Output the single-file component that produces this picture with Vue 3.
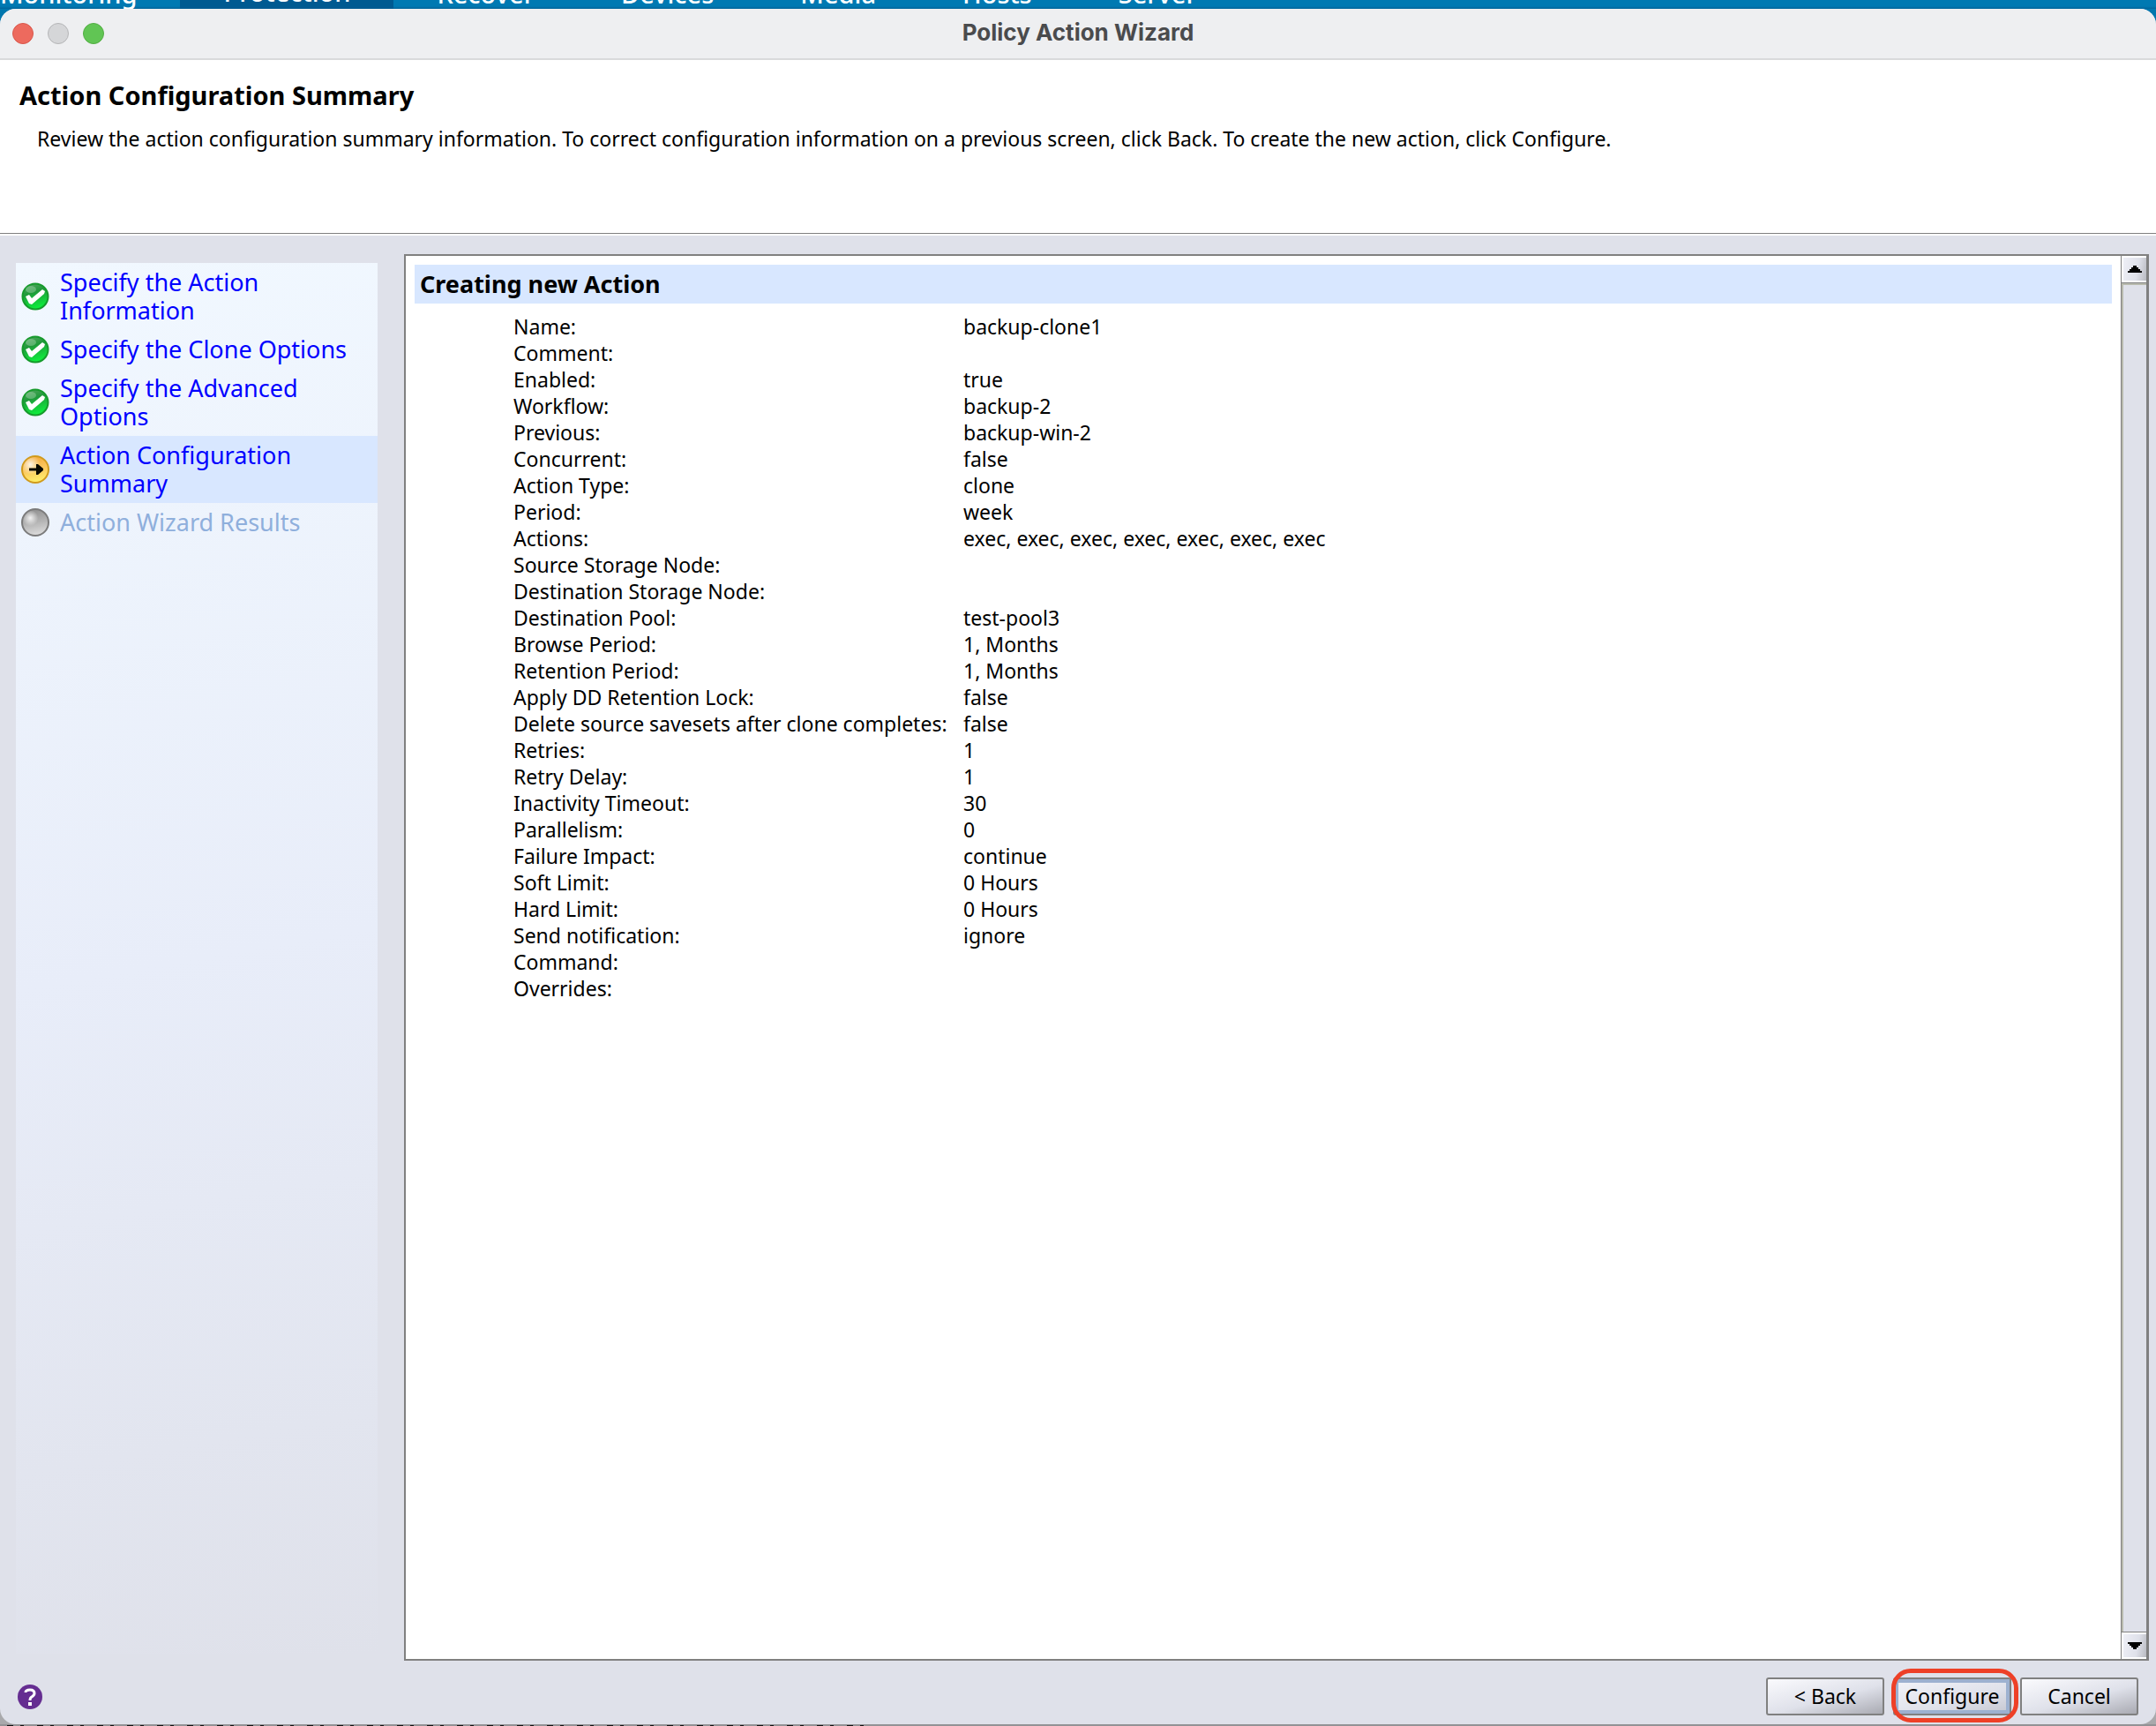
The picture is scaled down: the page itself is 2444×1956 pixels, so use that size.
<script setup>
const tabs = ['Monitoring', 'Protection', 'Recover', 'Devices', 'Media', 'Hosts', 'Server']

const steps = [
  { label: 'Specify the Action Information', state: 'done' },
  { label: 'Specify the Clone Options', state: 'done' },
  { label: 'Specify the Advanced Options', state: 'done' },
  { label: 'Action Configuration Summary', state: 'current' },
  { label: 'Action Wizard Results', state: 'pending' },
]

const rows = [
  ['Name:', 'backup-clone1'],
  ['Comment:', ''],
  ['Enabled:', 'true'],
  ['Workflow:', 'backup-2'],
  ['Previous:', 'backup-win-2'],
  ['Concurrent:', 'false'],
  ['Action Type:', 'clone'],
  ['Period:', 'week'],
  ['Actions:', 'exec, exec, exec, exec, exec, exec, exec'],
  ['Source Storage Node:', ''],
  ['Destination Storage Node:', ''],
  ['Destination Pool:', 'test-pool3'],
  ['Browse Period:', '1, Months'],
  ['Retention Period:', '1, Months'],
  ['Apply DD Retention Lock:', 'false'],
  ['Delete source savesets after clone completes:', 'false'],
  ['Retries:', '1'],
  ['Retry Delay:', '1'],
  ['Inactivity Timeout:', '30'],
  ['Parallelism:', '0'],
  ['Failure Impact:', 'continue'],
  ['Soft Limit:', '0 Hours'],
  ['Hard Limit:', '0 Hours'],
  ['Send notification:', 'ignore'],
  ['Command:', ''],
  ['Overrides:', ''],
]
</script>

<template>
  <div class="desktop">
    <nav class="tabs">
      <a v-for="(tab, i) in tabs" :key="tab" href="#" class="tab" :class="{ active: i === 1 }">{{ tab }}</a>
    </nav>

    <div class="window">
      <header class="titlebar">
        <div class="lights">
          <button class="light close" aria-label="Close"></button>
          <button class="light minimize" aria-label="Minimize" disabled></button>
          <button class="light zoom" aria-label="Zoom"></button>
        </div>
        <div class="title">Policy Action Wizard</div>
        <div class="lights-balance"></div>
      </header>

      <section class="intro">
        <h1>Action Configuration Summary</h1>
        <p>Review the action configuration summary information. To correct configuration information on a previous screen, click Back. To create the new action, click Configure.</p>
      </section>

      <main class="body">
        <ol class="steps">
          <li v-for="step in steps" :key="step.label" class="step" :class="step.state">
            <svg v-if="step.state === 'done'" class="step-icon" viewBox="0 0 32 32" aria-hidden="true">
              <defs>
                <linearGradient id="green" x1="0.3" y1="0" x2="0.6" y2="1">
                  <stop offset="0" stop-color="#4fa45c" />
                  <stop offset="0.35" stop-color="#1f9a3a" />
                  <stop offset="1" stop-color="#0cf53c" />
                </linearGradient>
              </defs>
              <circle cx="16" cy="16" r="14.5" fill="url(#green)" stroke="#169a2c" stroke-width="2" />
              <ellipse cx="11" cy="8" rx="6" ry="4" fill="#fff" opacity="0.25" />
              <path d="M5 16 L9 14 L12 18 L24 8 L27 10 L26 13 L12 25 L9 24 Z" fill="#fff" />
            </svg>
            <svg v-else-if="step.state === 'current'" class="step-icon" viewBox="0 0 32 32" aria-hidden="true">
              <defs>
                <linearGradient id="amber" x1="0.4" y1="0" x2="0.6" y2="1">
                  <stop offset="0" stop-color="#f3a93a" />
                  <stop offset="0.5" stop-color="#fbc860" />
                  <stop offset="1" stop-color="#fff36a" />
                </linearGradient>
                <radialGradient id="amberGlow" cx="0.3" cy="0.3" r="0.4">
                  <stop offset="0" stop-color="#fff" stop-opacity="0.85" />
                  <stop offset="1" stop-color="#fff" stop-opacity="0" />
                </radialGradient>
              </defs>
              <circle cx="16" cy="16" r="15" fill="url(#amber)" stroke="#d09a1c" stroke-width="2" />
              <circle cx="16" cy="16" r="14" fill="url(#amberGlow)" />
              <path d="M9 14.5 H17 V10 H19 L25 15 V17 L19 22 H17 V17.5 H9 Z" fill="#0a0a00" />
            </svg>
            <svg v-else class="step-icon" viewBox="0 0 32 32" aria-hidden="true">
              <defs>
                <linearGradient id="grey" x1="0.4" y1="0" x2="0.6" y2="1">
                  <stop offset="0" stop-color="#8f8f8f" />
                  <stop offset="0.5" stop-color="#b4b4b4" />
                  <stop offset="1" stop-color="#dedede" />
                </linearGradient>
                <radialGradient id="greyGlow" cx="0.3" cy="0.32" r="0.32">
                  <stop offset="0" stop-color="#fff" stop-opacity="0.85" />
                  <stop offset="1" stop-color="#fff" stop-opacity="0" />
                </radialGradient>
              </defs>
              <circle cx="16" cy="16" r="15" fill="url(#grey)" stroke="#7b7b7b" stroke-width="2" />
              <circle cx="16" cy="16" r="14" fill="url(#greyGlow)" />
            </svg>
            <span class="step-label">{{ step.label }}</span>
          </li>
        </ol>

        <section class="panel">
          <div class="content">
            <h2>Creating new Action</h2>
            <table>
              <tbody>
                <tr v-for="row in rows" :key="row[0]">
                  <th scope="row">{{ row[0] }}</th>
                  <td>{{ row[1] }}</td>
                </tr>
              </tbody>
            </table>
          </div>
          <div class="scrollbar">
            <button class="scroll-button" aria-label="Scroll up">
              <svg viewBox="0 0 16 8" aria-hidden="true"><path d="M6 0h4v2h2v2h2v2h2v2H0V6h2V4h2V2h2z" /></svg>
            </button>
            <div class="track"></div>
            <button class="scroll-button" aria-label="Scroll down">
              <svg viewBox="0 0 16 8" aria-hidden="true"><path d="M0 0h16v2h-2v2h-2v2h-2v2H6V6H4V4H2V2H0z" /></svg>
            </button>
          </div>
        </section>
      </main>

      <footer class="footer">
        <button class="help" aria-label="Help">
          <svg viewBox="0 0 28 28" aria-hidden="true">
            <circle cx="14" cy="14" r="14" fill="#652d91" />
            <path d="M9 9 Q9 6 14 6 Q19 6 19 10 Q19 12 16 14 Q14 15 14 18" fill="none" stroke="#fff" stroke-width="3" />
            <rect x="12" y="20" width="4" height="4" fill="#fff" />
          </svg>
        </button>
        <div class="actions">
          <button class="action">&lt; Back</button>
          <div class="highlight"><button class="action primary">Configure</button></div>
          <button class="action">Cancel</button>
        </div>
      </footer>
    </div>
    <div class="behind"></div>
  </div>
</template>

<style>
body {
  margin: 0;
}
</style>

<style scoped>
.desktop {
  display: flex;
  flex-direction: column;
  min-height: 100vh;
  background: linear-gradient(#0076ad 50%, #a9a9ac 50%);
  font-family: "Noto Sans", "Open Sans", sans-serif;
  font-size: 23px;
  color: #000;
}

button {
  margin: 0;
  padding: 0;
  border: 0;
  font: inherit;
  color: inherit;
}

.tabs {
  display: flex;
  align-items: flex-end;
  height: 10px;
  overflow: hidden;
  background: linear-gradient(#0079b2 70%, #00649a);
}

.tab {
  padding: 0 49px;
  font-size: 29px;
  font-weight: 500;
  line-height: 34px;
  color: #fff;
  text-decoration: none;
}

.tab:first-child {
  padding-left: 0;
}

.tab.active {
  padding-bottom: 2px;
  background: #005a91;
}

.window {
  display: flex;
  flex: 1;
  flex-direction: column;
  overflow: hidden;
  border-radius: 18px;
  background: #dfe1ea;
}

.titlebar {
  display: flex;
  align-items: center;
  height: 56px;
  border-bottom: 2px solid #d9dadb;
  background: #eeeff1;
}

.lights,
.lights-balance {
  display: flex;
  flex: 1;
  gap: 16px;
  padding: 0 14px;
}

.light {
  box-sizing: border-box;
  width: 24px;
  height: 24px;
  border: 1px solid #d9574b;
  border-radius: 50%;
  background: #ed6a5e;
}

.light.minimize {
  border-color: #b4b5b7;
  background: #d5d6d8;
}

.light.zoom {
  border-color: #52ad43;
  background: #61c554;
}

.title {
  padding-bottom: 2px;
  font-family: Inter, sans-serif;
  font-size: 26px;
  font-weight: 700;
  line-height: 32px;
  color: #4a4b4d;
}

.intro {
  box-sizing: border-box;
  min-height: 197px;
  padding: 20px 22px;
  border-bottom: 1px solid #808080;
  background: #fff;
}

h1 {
  margin: 0;
  font-size: 29px;
  font-weight: 700;
  line-height: 40px;
}

p {
  margin: 13px 0 0 20px;
  line-height: 32px;
}

.body {
  display: flex;
  flex: 1;
  gap: 30px;
  padding: 21px 8px 0 18px;
  border-top: 2px solid #fff;
}

.steps {
  box-sizing: border-box;
  width: 410px;
  margin: 10px 0 8px;
  padding: 0;
  list-style: none;
  background: linear-gradient(170deg, #f1f8ff, #e8edf9 50%, #dfe1ea);
}

.step {
  display: flex;
  align-items: center;
  gap: 12px;
  padding: 6px;
  font-size: 27px;
  line-height: 32px;
  color: #00f;
}

.step.current {
  background: #d8e7ff;
}

.step.pending {
  color: #8fafdc;
}

.step-icon {
  flex: none;
  width: 32px;
  height: 32px;
}

.step-label {
  flex: 1;
}

.panel {
  display: flex;
  flex: 1;
  border: 2px solid #808080;
  border-right-width: 3px;
  background: #fff;
}

.content {
  flex: 1;
  padding: 10px;
}

h2 {
  margin: 0;
  padding: 0 6px;
  background: #d8e7ff;
  font-size: 27px;
  font-weight: 700;
  line-height: 44px;
}

table {
  margin: 11px 0 0 112px;
  border-collapse: collapse;
}

th,
td {
  padding: 0;
  font-weight: 400;
  line-height: 30px;
  text-align: left;
}

th {
  width: 510px;
}

.scrollbar {
  display: flex;
  flex-direction: column;
  width: 28px;
  border-left: 1px solid #808080;
}

.scroll-button {
  display: flex;
  align-items: center;
  justify-content: center;
  height: 30px;
  border: 2px solid #fff;
  border-right-width: 0;
  background: linear-gradient(100deg, #eeeff6, #dfe1ea 60%, #b9bac1);
}

.scroll-button svg {
  width: 16px;
  height: 8px;
}

.track {
  flex: 1;
  border: solid #808080;
  border-width: 1px 0;
  background: #dfe1ea;
  box-shadow: inset 2px 2px #b9bbae;
}

.footer {
  display: flex;
  align-items: center;
  justify-content: space-between;
  padding: 19px 20px 10px;
}

.help {
  width: 28px;
  height: 28px;
  background: none;
}

.help svg {
  display: block;
}

.actions {
  display: flex;
  gap: 10px;
}

.action {
  box-sizing: border-box;
  width: 134px;
  height: 43px;
  padding-bottom: 2px;
  border: 2px solid #808080;
  border-radius: 3px;
  background: linear-gradient(165deg, #fafafd, #dfe1ea 55%, #a9aab2);
}

.action.primary {
  background: linear-gradient(165deg, #f4f4f9, #dfe1ea 60%, #c4c6d0);
  box-shadow: inset 0 0 0 4px #9db1d0;
}

.highlight {
  position: relative;
}

.highlight::after {
  position: absolute;
  inset: -10px -8px -8px -2px;
  border: 5px solid #ee4027;
  border-radius: 22px;
  content: "";
  pointer-events: none;
}

.behind {
  height: 2px;
  background:
    repeating-linear-gradient(90deg, #111 0 7px, transparent 7px 15px, #111 15px 19px, transparent 19px 34px) 8px 1px / 976px 1px no-repeat,
    #929295;
}
</style>
